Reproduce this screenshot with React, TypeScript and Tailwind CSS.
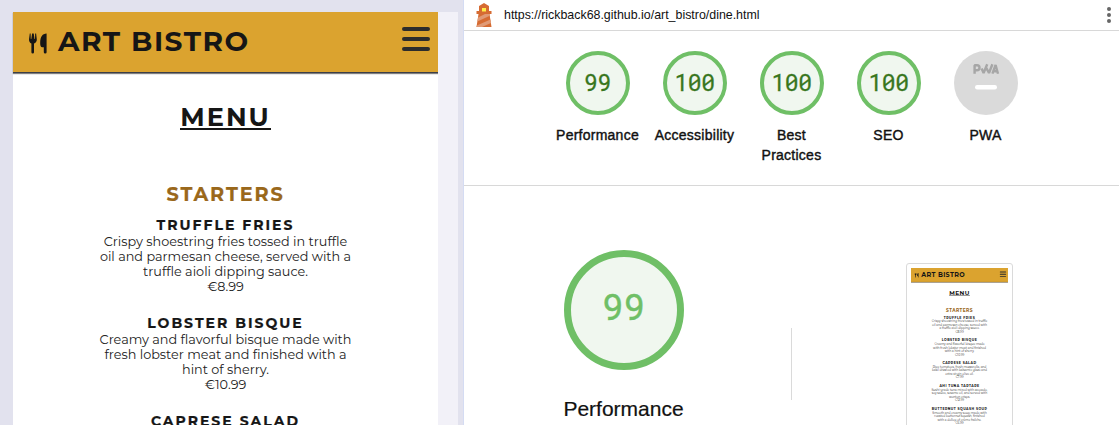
import React from "react";

type Dish = { name: string; lines: string[]; price: string };

const starters: Dish[] = [
  {
    name: "TRUFFLE FRIES",
    lines: ["Crispy shoestring fries tossed in truffle", "oil and parmesan cheese, served with a", "truffle aioli dipping sauce."],
    price: "€8.99",
  },
  {
    name: "LOBSTER BISQUE",
    lines: ["Creamy and flavorful bisque made with", "fresh lobster meat and finished with a", "hint of sherry."],
    price: "€10.99",
  },
  {
    name: "CAPRESE SALAD",
    lines: ["Ripe tomatoes, fresh mozzarella, and", "basil drizzled with balsamic glaze and", "extra virgin olive oil."],
    price: "€7.99",
  },
  {
    name: "AHI TUNA TARTARE",
    lines: ["Sushi-grade tuna mixed with avocado,", "soy sauce, sesame oil, and served with", "wonton crisps."],
    price: "€12.99",
  },
  {
    name: "BUTTERNUT SQUASH SOUP",
    lines: ["Smooth and creamy soup made with", "roasted butternut squash, finished", "with a dollop of crème fraîche."],
    price: "€6.99",
  },
];

const previewStarters: Dish[] = [
  {
    ...starters[0],
    lines: ["Crispy shoestring fries tossed in truffle", "oil and parmesan cheese, served with", "a truffle aioli dipping sauce."],
  },
  {
    ...starters[1],
    lines: ["Creamy and flavorful bisque made", "with fresh lobster meat and finished", "with a hint of sherry."],
  },
  ...starters.slice(2),
];

function Utensils() {
  return (
    <svg className="mt-[3px] h-[21px] w-[19px] shrink-0" viewBox="0 0 19 21" fill="#161616">
      <path d="M1.8.6 L1 6.2 C.9 8.5 2 10 3.4 10.5 V19.3 a1.3 1.3 0 0 0 2.6 0 V10.5 C7.5 10 9 8.5 8.8 6.2 L8.1 .6 H7.2 L7 6 H6.5 L5.7 .6 H4.1 L3.3 6 H2.8 L2.6 .6 Z" />
      <path d="M18.6 .8 V19.2 a1.4 1.4 0 0 1 -2.8 0 V14.3 H14 C12.4 13.8 12.1 12 12.2 9 C12.4 4 14.4 .5 18.6 .5 Z" />
    </svg>
  );
}

function MenuPage({ dishes }: { dishes: Dish[] }) {
  return (
    <div className="flex w-[425px] shrink-0 flex-col bg-white font-[Montserrat,Inter,sans-serif] text-[#161616]">
      <header className="flex h-[61px] shrink-0 items-center border-b border-[#3c3f48] bg-[#dba32f] pr-[8.5px] pl-[15px] shadow-[0_1px_1px_rgba(0,0,0,0.5)]">
        <Utensils />
        <div className="mb-[2px] ml-[11px] text-[28px] leading-[58px] font-bold tracking-[1.5px] whitespace-nowrap">ART BISTRO</div>
        <div className="mb-[6px] ml-auto flex flex-col gap-[6px]">
          <div className="h-1 w-7 rounded-full bg-[#2c2c2c]" />
          <div className="h-1 w-7 rounded-full bg-[#2c2c2c]" />
          <div className="h-1 w-7 rounded-full bg-[#2c2c2c]" />
        </div>
      </header>
      <h1 className="mx-auto mt-[29px] h-[28px] border-b-2 border-[#161616] text-[25.6px] leading-[30px] font-bold tracking-[2px]">MENU</h1>
      <h2 className="mt-[54px] text-center text-[19.2px] leading-[20px] font-bold tracking-[1.9px] text-[#9a681b] [-webkit-text-stroke:0.2px_#9a681b]">STARTERS</h2>
      <div className="mt-[14px] flex flex-col gap-[22px] text-center text-[12.8px] leading-[15px] whitespace-nowrap">
        {dishes.map((d) => (
          <section key={d.name}>
            <h3 className="mb-px text-[14px] leading-[15px] font-bold tracking-[2px] [-webkit-text-stroke:0.2px_#161616]">{d.name}</h3>
            {d.lines.map((l) => (
              <p key={l} className="text-[#222]">{l}</p>
            ))}
            <p className="text-[#222]">{d.price}</p>
          </section>
        ))}
      </div>
    </div>
  );
}

function Lighthouse() {
  return (
    <svg className="h-6 w-4" viewBox="0 0 16 24">
      <path d="M8 0 L13 3 V8 H15.5 V11 H13.5 L15.5 24 H.5 L2.5 11 H.5 V8 H3 V3 Z" fill="#d66b32" />
      <path d="M2.1 14.5 L9 11 H13.5 L13.8 12.8 L1.4 18.5 Z M.8 22.5 L14.5 16.5 L15 20 L6 24 H.5 Z" fill="#e09a76" />
      <path d="M6 5 H10 V8.5 H6 Z" fill="#ffee48" />
    </svg>
  );
}

function Gauge({ score, label }: { score: number; label: string }) {
  return (
    <div className="flex w-[97px] flex-col items-center">
      <div className="flex h-16 w-16 items-center justify-center rounded-full border-4 border-[#6fbf66] bg-[#f0f7ef] pb-[2px] font-['Roboto_Mono','DejaVu_Sans_Mono',monospace] text-[23px] leading-none tracking-[-0.4px] text-[#38761d] [-webkit-text-stroke:0.3px_#38761d]">
        {score}
      </div>
      <Label text={label} />
    </div>
  );
}

function Label({ text }: { text: string }) {
  return (
    <div className="mt-[10px] w-[84px] text-center text-sm leading-5 tracking-[0.25px] [-webkit-text-stroke:0.4px_#111]">{text}</div>
  );
}

export default function App() {
  return (
    <div className="flex h-[425px] w-[1119px] overflow-hidden bg-[#e2e2ee]">
      <div className="flex w-[463px] shrink-0 pt-3 pl-[13px]">
        <MenuPage dishes={starters.slice(0, 3)} />
        <div className="w-5 bg-[#f2f1f8]" />
      </div>
      <main className="flex flex-1 flex-col border-l border-[#d5dcf3] bg-white font-['Liberation_Sans',Arial,sans-serif] text-[#111]">
        <div className="flex h-[31px] shrink-0 items-center border-b border-[#d8d8d8] pr-2 pl-3">
          <Lighthouse />
          <div className="ml-3 text-[12.4px] leading-4">https://rickback68.github.io/art_bistro/dine.html</div>
          <div className="ml-auto flex flex-col gap-[2px]">
            <div className="h-1 w-1 rounded-full bg-[#666]" />
            <div className="h-1 w-1 rounded-full bg-[#666]" />
            <div className="h-1 w-1 rounded-full bg-[#666]" />
          </div>
        </div>
        <div className="flex h-[155px] shrink-0 justify-center border-b border-[#d8d8d8] pt-5">
          <Gauge score={99} label="Performance" />
          <Gauge score={100} label="Accessibility" />
          <Gauge score={100} label="Best Practices" />
          <Gauge score={100} label="SEO" />
          <div className="flex w-[97px] flex-col items-center">
            <svg className="h-16 w-16" viewBox="0 0 64 64">
              <circle cx="32" cy="32" r="32" fill="#dadada" />
              <path d="M20.6 22.7 V14.2 H23 a2.4 2.4 0 0 1 0 5 H20.6 M27.6 17.5 L29.6 22 L33.2 13.2 M32.4 17 L35 22 L38.4 13.2 M38.4 22.7 L41.6 14 L44 22.7 M40 20.2 H43" fill="none" stroke="#a6a6a6" strokeWidth="2.4" strokeLinejoin="bevel" />
              <path d="M23.2 36.3 H40.8" stroke="#fff" strokeWidth="4.4" strokeLinecap="round" />
            </svg>
            <Label text="PWA" />
          </div>
        </div>
        <div className="flex flex-1 overflow-hidden">
          <div className="flex w-[319px] flex-col items-center pt-[64px]">
            <div className="flex h-[120px] w-[120px] items-center justify-center rounded-full border-7 border-[#6fbf66] bg-[#f0f7ef] pb-[8px] font-['Roboto_Mono','DejaVu_Sans_Mono',monospace] text-[36px] leading-none text-[#6fbf66] [-webkit-text-stroke:0.4px_#6fbf66]">
              99
            </div>
            <div className="mt-[27px] text-[21px] leading-6 [-webkit-text-stroke:0.2px_#111]">Performance</div>
          </div>
          <div className="mt-[142px] ml-[8px] h-[72px] w-px bg-[#dadada]" />
          <div className="mt-[77px] ml-[114px] h-[200px] w-[107px] shrink-0 overflow-hidden rounded-[3px] border border-[#dadada] p-1">
            <div className="h-[190px] w-[97px] overflow-hidden">
              <div className="w-[425px] origin-top-left scale-x-[0.2282] scale-y-[0.2325]">
                <MenuPage dishes={previewStarters} />
              </div>
            </div>
          </div>
        </div>
      </main>
    </div>
  );
}
